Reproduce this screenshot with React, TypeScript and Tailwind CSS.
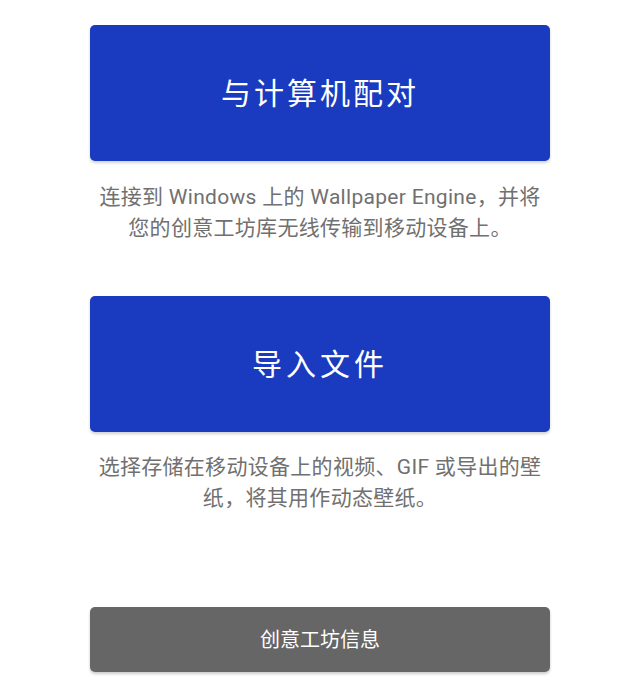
import React from "react";

export default function App() {
  const font = { fontFamily: 'Roboto, "Noto Sans CJK SC", sans-serif' };
  return (
    <div className="w-[640px] h-[691px] bg-white overflow-hidden" style={font}>
      <div className="px-[90px] pt-[25px] flex flex-col">
        <button className="h-[136px] w-full rounded-[5px] bg-[#1a3abf] text-white text-[30px] tracking-[3px] shadow-[0_2px_3px_rgba(0,0,0,0.18)] flex items-center justify-center">
          与计算机配对
        </button>
        <p className="mt-[21px] text-center text-[21px] leading-[31px] tracking-[0.3px] text-[#707070]">
          连接到 Windows 上的 Wallpaper Engine，并将
          <br />
          您的创意工坊库无线传输到移动设备上。
        </p>
        <button className="mt-[52px] h-[136px] w-full rounded-[5px] bg-[#1a3abf] text-white text-[30px] tracking-[4px] shadow-[0_2px_3px_rgba(0,0,0,0.18)] flex items-center justify-center">
          导入文件
        </button>
        <p className="mt-[20px] text-center text-[21px] leading-[31px] tracking-[0.3px] text-[#707070]">
          选择存储在移动设备上的视频、GIF 或导出的壁
          <br />
          纸，将其用作动态壁纸。
        </p>
        <button className="mt-[93px] h-[65px] w-full rounded-[5px] bg-[#666666] text-white text-[20px] shadow-[0_2px_3px_rgba(0,0,0,0.2)] flex items-center justify-center">
          创意工坊信息
        </button>
      </div>
    </div>
  );
}
